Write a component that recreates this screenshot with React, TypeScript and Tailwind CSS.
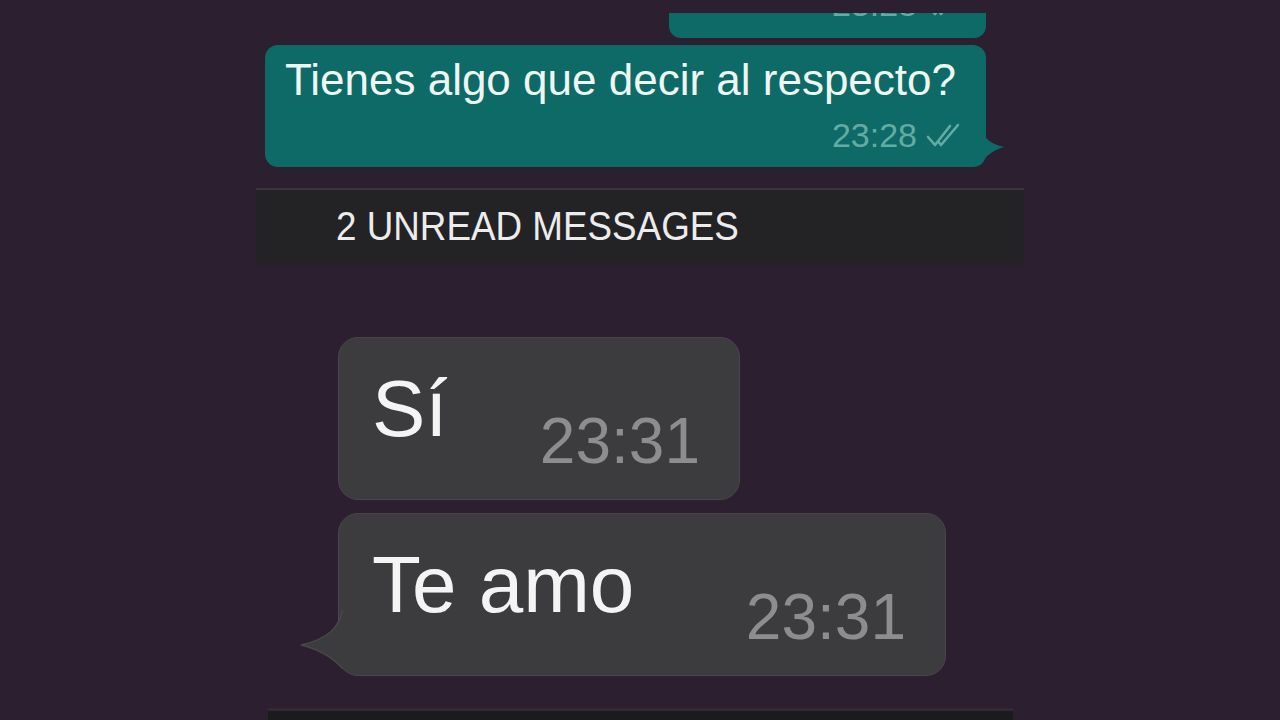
import React from 'react';

// ─── Pieces ──────────────────────────────────────────────

const font = "font-['Liberation_Sans',Arial,sans-serif]";

const DoubleTick: React.FC = () => (
    <svg width="40" height="24" viewBox="0 0 40 24" fill="none" className="mb-[5px] shrink-0">
        <path d="M3 14 L10 22 L25 3" stroke="#63aba4" strokeWidth="2.6" strokeLinecap="round" strokeLinejoin="round" />
        <path d="M14 19.5 L16 22 L33 2" stroke="#63aba4" strokeWidth="2.6" strokeLinecap="round" strokeLinejoin="round" />
    </svg>
);

const SentFooter: React.FC = () => (
    <div className="flex items-end justify-end gap-[8px]">
        <span className="text-[34px] leading-[34px] text-[#63aba4]">23:28</span>
        <DoubleTick />
    </div>
);

const TailRight: React.FC = () => (
    <svg width="26" height="44" viewBox="0 0 26 44" className="absolute right-[-19px] bottom-[2px]">
        <path d="M0 0 C 3 16, 9 22, 25 26 C 14 29, 8 34, 0 44 Z" fill="#0e6a66" />
    </svg>
);

const TailLeft: React.FC = () => (
    <svg width="44" height="60" viewBox="0 0 44 60" className="absolute left-[-40px] bottom-[6px]">
        <path d="M44 0 C 40 18, 30 30, 2 36 C 18 40, 32 46, 44 60 Z" fill="#3c3b3e" />
        <path d="M44 0 C 40 18, 30 30, 2 36 C 18 40, 32 46, 44 60" fill="none" stroke="#4a464c" strokeWidth="1.5" />
    </svg>
);

const Received: React.FC<{ text: string; width: string; tail?: boolean }> = ({ text, width, tail }) => (
    <div className={`relative ml-[82px] h-[163px] ${width} rounded-[20px] bg-[#3c3b3e] border border-[#4a464c] flex items-start justify-between pl-[33px] pr-[39px] pt-[31px]`}>
        {tail && <TailLeft />}
        <span className="text-[80px] leading-[80px] text-[#f4f4f4]">{text}</span>
        <span className="mt-[40px] text-[64px] leading-[64px] text-[#8d8d90]">23:31</span>
    </div>
);

// ─── Page ────────────────────────────────────────────────

export default function App() {
    return (
        <div className={`w-[1280px] h-[720px] overflow-hidden bg-[#2c1f30] ${font}`}>
            <div className="mx-auto w-[768px] flex flex-col">
                {/* previous bubble, cut at the top */}
                <div className="mt-[13px] ml-[413px] w-[317px] h-[25px] overflow-hidden">
                    <div className="-mt-[35px] h-[60px] rounded-[12px] bg-[#0e6a66] flex flex-col justify-end pr-[21px] pb-[17px]">
                        <SentFooter />
                    </div>
                </div>

                {/* sent bubble */}
                <div className="relative mt-[7px] ml-[9px] w-[721px] h-[122px] rounded-[13px] bg-[#0e6a66] flex flex-col pl-[20px] pr-[21px] pt-[13px] pb-[15px]">
                    <TailRight />
                    <p className="text-[44px] leading-[44px] text-[#eef6f4]">Tienes algo que decir al respecto?</p>
                    <div className="mt-auto">
                        <SentFooter />
                    </div>
                </div>

                {/* unread divider */}
                <div className="mt-[21px] h-[77px] bg-[#232225] border-t-2 border-[#3b3539] pl-[80px] pt-[16px]">
                    <span className="inline-block origin-left scale-x-[0.92] text-[40px] leading-[40px] text-[#ececec]">2 UNREAD MESSAGES</span>
                </div>

                {/* received */}
                <div className="mt-[72px]">
                    <Received text="Sí" width="w-[402px]" />
                </div>
                <div className="mt-[13px]">
                    <Received text="Te amo" width="w-[608px]" tail />
                </div>

                {/* bottom bar edge */}
                <div className="mt-[32px] ml-[12px] w-[745px] h-[3px] bg-[#2f2a36]" />
                <div className="ml-[12px] w-[745px] h-[20px] bg-[#1b1a1d]" />
            </div>
        </div>
    );
}
